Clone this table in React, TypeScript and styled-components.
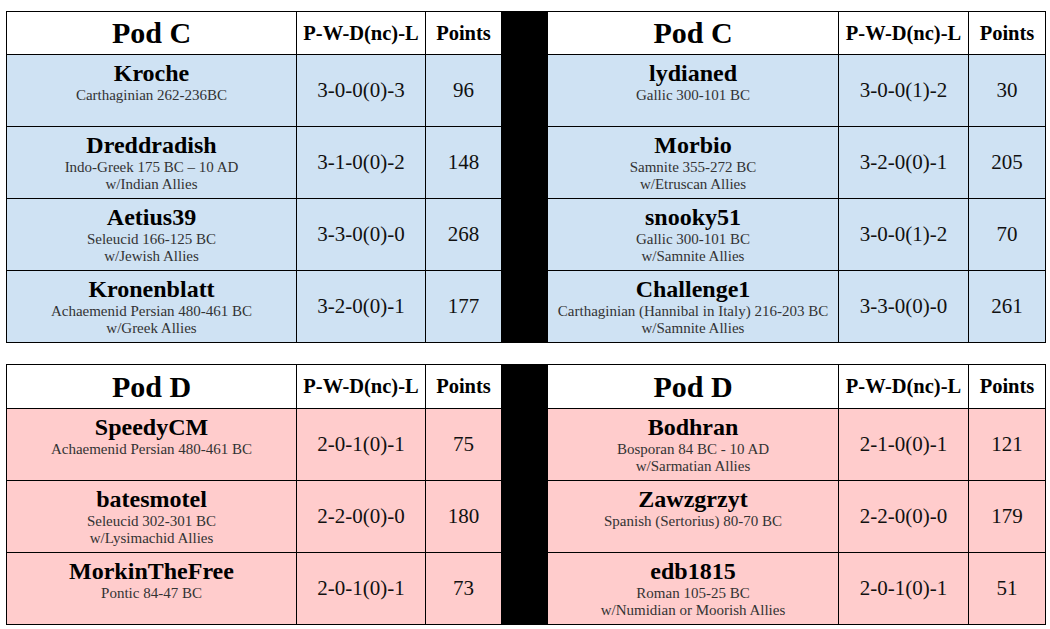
import React from "react";
import styled, { createGlobalStyle } from "styled-components";

const GlobalStyle = createGlobalStyle`
  html, body {
    margin: 0;
    padding: 0;
    background: #ffffff;
  }
  body {
    font-family: "Liberation Serif", "Times New Roman", serif;
    color: #000;
  }
`;

type Player = {
  name: string;
  army: string[];
  record: string;
  points: number;
};

type PodData = {
  title: string;
  tint: string;
  headerHeight: number;
  left: Player[];
  right: Player[];
};

const Page = styled.div`
  display: flex;
  flex-direction: column;
  gap: 21px;
  padding: 11px 0 0 6px;
`;

const Grid = styled.div<{ $rows: number; $head: number }>`
  display: grid;
  width: 1040px;
  box-sizing: border-box;
  grid-template-columns: 289px 128px 75px 45px 290px 129px 76px;
  grid-template-rows: ${(p) => p.$head}px repeat(${(p) => p.$rows}, 71px);
  gap: 1px;
  padding: 1px;
  background: #000;
`;

const Divider = styled.div<{ $rows: number }>`
  grid-column: 4;
  grid-row: 1 / span ${(p) => p.$rows + 1};
  background: #000;
`;

const HeadCell = styled.div`
  background: #fff;
  display: flex;
  align-items: center;
  justify-content: center;
  font-weight: 700;
  font-size: 20.5px;
  white-space: nowrap;
`;

const PodTitle = styled(HeadCell)`
  font-size: 30px;
`;

const NameCell = styled.div<{ $tint: string }>`
  background: ${(p) => p.$tint};
  display: flex;
  flex-direction: column;
  align-items: center;
  padding-top: 5px;
  text-align: center;
  box-sizing: border-box;
`;

const PlayerName = styled.div`
  font-weight: 700;
  font-size: 24px;
  line-height: 27px;
`;

const ArmyLine = styled.div`
  font-size: 15px;
  line-height: 17px;
  color: #333;
  white-space: nowrap;
`;

const ValueCell = styled.div<{ $tint: string }>`
  background: ${(p) => p.$tint};
  display: flex;
  align-items: center;
  justify-content: center;
  font-size: 21px;
  color: #111;
`;

const pods: PodData[] = [
  {
    title: "Pod C",
    tint: "#cfe2f3",
    headerHeight: 42,
    left: [
      { name: "Kroche", army: ["Carthaginian 262-236BC"], record: "3-0-0(0)-3", points: 96 },
      { name: "Dreddradish", army: ["Indo-Greek 175 BC \u2013 10 AD", "w/Indian Allies"], record: "3-1-0(0)-2", points: 148 },
      { name: "Aetius39", army: ["Seleucid 166-125 BC", "w/Jewish Allies"], record: "3-3-0(0)-0", points: 268 },
      { name: "Kronenblatt", army: ["Achaemenid Persian 480-461 BC", "w/Greek Allies"], record: "3-2-0(0)-1", points: 177 },
    ],
    right: [
      { name: "lydianed", army: ["Gallic 300-101 BC"], record: "3-0-0(1)-2", points: 30 },
      { name: "Morbio", army: ["Samnite 355-272 BC", "w/Etruscan Allies"], record: "3-2-0(0)-1", points: 205 },
      { name: "snooky51", army: ["Gallic 300-101 BC", "w/Samnite Allies"], record: "3-0-0(1)-2", points: 70 },
      { name: "Challenge1", army: ["Carthaginian (Hannibal in Italy) 216-203 BC", "w/Samnite Allies"], record: "3-3-0(0)-0", points: 261 },
    ],
  },
  {
    title: "Pod D",
    tint: "#ffcccc",
    headerHeight: 43,
    left: [
      { name: "SpeedyCM", army: ["Achaemenid Persian 480-461 BC"], record: "2-0-1(0)-1", points: 75 },
      { name: "batesmotel", army: ["Seleucid 302-301 BC", "w/Lysimachid Allies"], record: "2-2-0(0)-0", points: 180 },
      { name: "MorkinTheFree", army: ["Pontic 84-47 BC"], record: "2-0-1(0)-1", points: 73 },
    ],
    right: [
      { name: "Bodhran", army: ["Bosporan 84 BC - 10 AD", "w/Sarmatian Allies"], record: "2-1-0(0)-1", points: 121 },
      { name: "Zawzgrzyt", army: ["Spanish (Sertorius) 80-70 BC"], record: "2-2-0(0)-0", points: 179 },
      { name: "edb1815", army: ["Roman 105-25 BC", "w/Numidian or Moorish Allies"], record: "2-0-1(0)-1", points: 51 },
    ],
  },
];

function PlayerCells({ player, tint }: { player: Player; tint: string }) {
  return (
    <>
      <NameCell $tint={tint}>
        <PlayerName>{player.name}</PlayerName>
        {player.army.map((line) => (
          <ArmyLine key={line}>{line}</ArmyLine>
        ))}
      </NameCell>
      <ValueCell $tint={tint}>{player.record}</ValueCell>
      <ValueCell $tint={tint}>{player.points}</ValueCell>
    </>
  );
}

function Pod({ pod }: { pod: PodData }) {
  const rows = pod.left.length;
  return (
    <Grid $rows={rows} $head={pod.headerHeight}>
      <Divider $rows={rows} />
      <PodTitle>{pod.title}</PodTitle>
      <HeadCell>P-W-D(nc)-L</HeadCell>
      <HeadCell>Points</HeadCell>
      <PodTitle>{pod.title}</PodTitle>
      <HeadCell>P-W-D(nc)-L</HeadCell>
      <HeadCell>Points</HeadCell>
      {pod.left.map((p, i) => (
        <React.Fragment key={p.name}>
          <PlayerCells player={p} tint={pod.tint} />
          <PlayerCells player={pod.right[i]} tint={pod.tint} />
        </React.Fragment>
      ))}
    </Grid>
  );
}

export default function App() {
  return (
    <>
      <GlobalStyle />
      <Page>
        {pods.map((pod) => (
          <Pod key={pod.title} pod={pod} />
        ))}
      </Page>
    </>
  );
}
